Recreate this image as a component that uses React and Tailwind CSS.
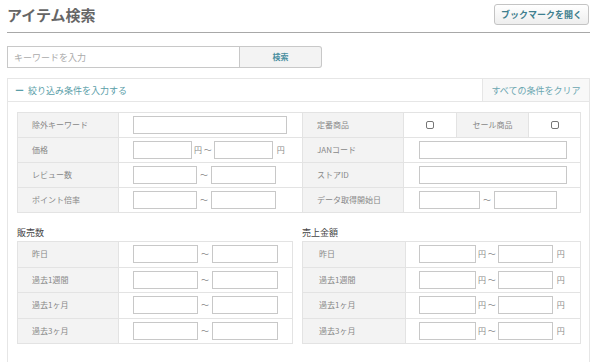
import React from 'react';

const Box = ({ w }) => (
  <div className={`h-[18px] shrink-0 border border-[#c8c8c8] bg-white ${w}`} />
);

const Check = () => (
  <div className="h-[8px] w-[8px] rounded-[2px] border border-[#777] bg-white" />
);

const Label = ({ children, pad = 'pl-[14px]', w = 'w-[101px]' }) => (
  <div className={`flex h-full shrink-0 items-center border-r border-[#e3e3e3] bg-[#f3f3f3] text-[8px] leading-none text-[#888] ${w} ${pad}`}>
    {children}
  </div>
);

const Row = ({ children, h = 'h-[25px]' }) => (
  <div className={`flex items-center border-b border-[#e3e3e3] ${h}`}>{children}</div>
);

const Tilde = ({ yen }) => (
  <span className="flex h-[18px] shrink-0 items-center text-[8px] leading-none text-[#888]">{yen ? '円 ～' : '～'}</span>
);

const Yen = () => (
  <span className="flex h-[18px] shrink-0 items-center text-[8px] leading-none text-[#888]">円</span>
);

const periods = ['昨日', '過去1週間', '過去1ヶ月', '過去3ヶ月'];

export default function App() {
  return (
    <div className="h-[362px] w-[600px] overflow-hidden bg-white px-[7px] font-['Noto_Sans_CJK_JP','Noto_Sans',sans-serif] text-[#555]">
      {/* header */}
      <div className="mr-[3px] flex h-[33px] items-start justify-between border-b border-[#a8a8a8] pt-[4px]">
        <h1 className="pt-[2px] text-[15px] font-bold leading-[18px] text-[#666]">アイテム検索</h1>
        <button className="mr-[1px] flex h-[21px] w-[95px] items-center justify-center rounded-[3px] border border-[#c4c4c4] bg-gradient-to-b from-white to-[#eeeeee] text-[9px] font-bold leading-none text-[#3f7f8e]">
          ブックマークを開く
        </button>
      </div>

      {/* keyword search */}
      <div className="mt-[13px] flex h-[22px]">
        <div className="flex w-[233px] items-center border border-[#c8c8c8] pl-[6px] text-[9px] leading-none text-[#aaa]">
          キーワードを入力
        </div>
        <button className="flex w-[82px] items-center justify-center rounded-r-[3px] border border-l-0 border-[#c8c8c8] bg-[#f3f3f3] text-[8px] font-bold leading-none text-[#4a8fa0]">
          検索
        </button>
      </div>

      {/* filter panel */}
      <div className="mr-[3px] mt-[10px] h-[300px] border border-[#e6e6e6]">
        <div className="flex h-[23px] items-stretch border-b border-[#e6e6e6]">
          <div className="flex flex-1 items-center gap-[4px] pl-[7px] text-[9px] leading-none text-[#5a9ea8]">
            <span className="font-bold">ー</span>
            <span>絞り込み条件を入力する</span>
          </div>
          <div className="flex w-[107px] items-center justify-center border-l border-[#e6e6e6] bg-[#f8f8f8] text-[9px] leading-none text-[#6aa6b0]">
            すべての条件をクリア
          </div>
        </div>

        <div className="pl-[9px] pr-[8px] pt-[10px]">
          {/* upper tables */}
          <div className="flex">
            <div className="w-[285px] border-l border-t border-[#e3e3e3]">
              <Row>
                <Label>除外キーワード</Label>
                <div className="pl-[14px]"><Box w="w-[154px]" /></div>
              </Row>
              <Row>
                <Label>価格</Label>
                <div className="flex items-center gap-[1px] pl-[14px]">
                  <Box w="w-[59px]" />
                  <span className="px-[1px]"><Tilde yen /></span>
                  <Box w="w-[59px]" />
                  <span className="pl-[3px]"><Yen /></span>
                </div>
              </Row>
              <Row>
                <Label>レビュー数</Label>
                <div className="flex items-center gap-[3px] pl-[14px]">
                  <Box w="w-[64px]" />
                  <Tilde />
                  <Box w="w-[65px]" />
                </div>
              </Row>
              <Row>
                <Label>ポイント倍率</Label>
                <div className="flex items-center gap-[3px] pl-[14px]">
                  <Box w="w-[64px]" />
                  <Tilde />
                  <Box w="w-[65px]" />
                </div>
              </Row>
            </div>
            <div className="flex-1 border-l border-r border-t border-[#e3e3e3]">
              <Row>
                <Label>定番商品</Label>
                <div className="flex h-full w-[53px] items-center justify-center border-r border-[#e3e3e3]"><Check /></div>
                <Label w="w-[72px]" pad="justify-center">セール商品</Label>
                <div className="flex h-full flex-1 items-center justify-center"><Check /></div>
              </Row>
              <Row>
                <Label>JANコード</Label>
                <div className="pl-[15px]"><Box w="w-[148px]" /></div>
              </Row>
              <Row>
                <Label>ストアID</Label>
                <div className="pl-[15px]"><Box w="w-[148px]" /></div>
              </Row>
              <Row>
                <Label>データ取得開始日</Label>
                <div className="flex items-center gap-[3px] pl-[15px]">
                  <Box w="w-[61px]" />
                  <Tilde />
                  <Box w="w-[63px]" />
                </div>
              </Row>
            </div>
          </div>

          {/* lower tables */}
          <div className="mt-[14px] flex">
            <div className="w-[276px]">
              <div className="h-[14px] text-[9px] leading-[12px] text-[#444]">販売数</div>
              <div className="border-l border-r border-t border-[#e3e3e3]">
                {periods.map((p) => (
                  <Row key={p} h="h-[25.5px]">
                    <Label>{p}</Label>
                    <div className="flex items-center gap-[3px] pl-[14px]">
                      <Box w="w-[65px]" />
                      <Tilde />
                      <Box w="w-[66px]" />
                    </div>
                  </Row>
                ))}
              </div>
            </div>
            <div className="ml-[9px] w-[279px]">
              <div className="h-[14px] text-[9px] leading-[12px] text-[#444]">売上金額</div>
              <div className="border-l border-r border-t border-[#e3e3e3]">
                {periods.map((p) => (
                  <Row key={p} h="h-[25.5px]">
                    <Label w="w-[103px]" pad="pl-[16px]">{p}</Label>
                    <div className="flex items-center gap-[1px] pl-[13px]">
                      <Box w="w-[57px]" />
                      <span className="px-[1px]"><Tilde yen /></span>
                      <Box w="w-[55px]" />
                      <span className="pl-[3px]"><Yen /></span>
                    </div>
                  </Row>
                ))}
              </div>
            </div>
          </div>
        </div>
      </div>
    </div>
  );
}
